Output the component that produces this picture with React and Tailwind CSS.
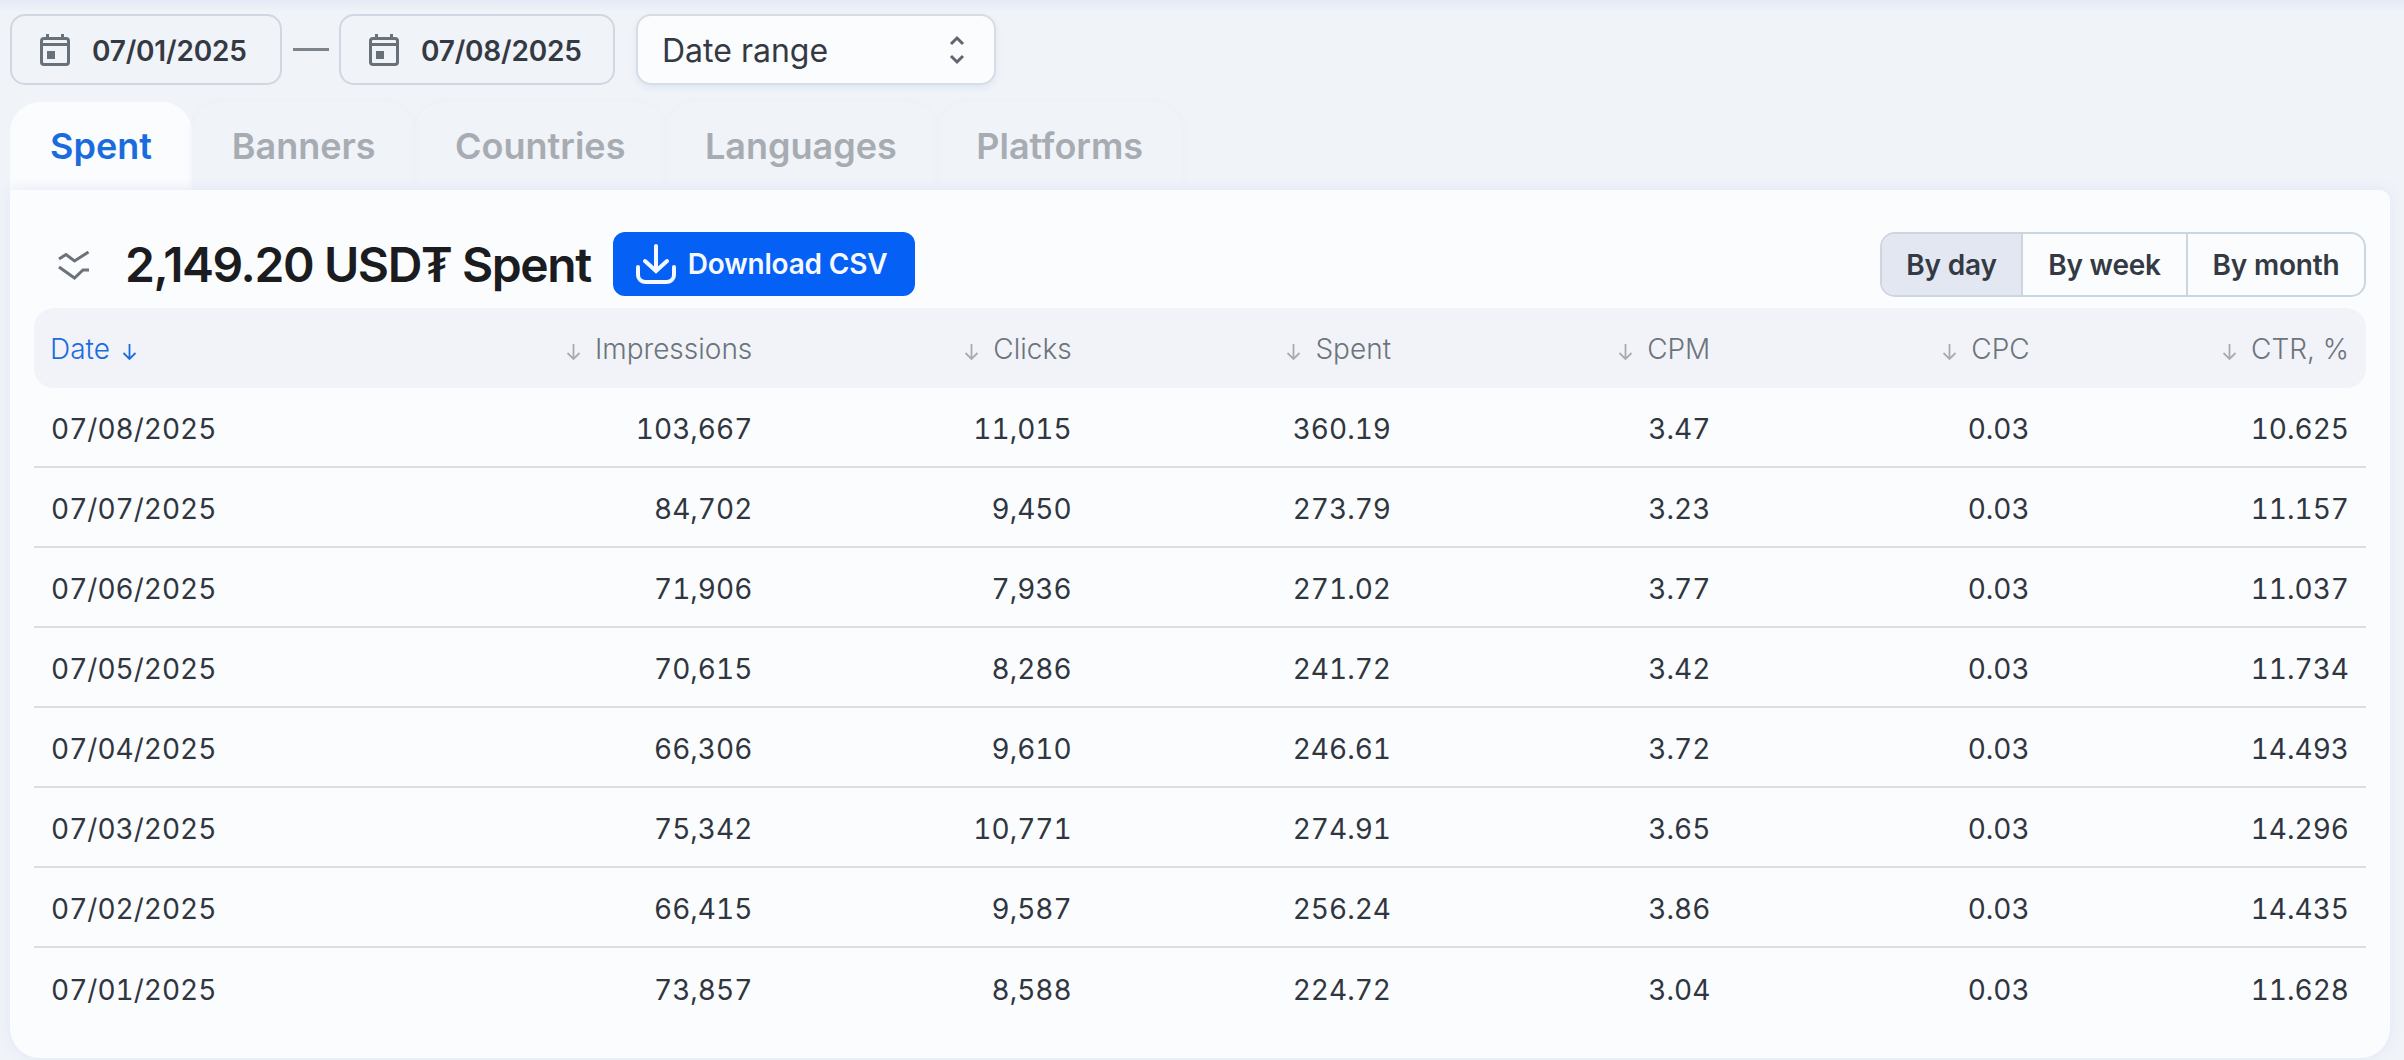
import React from "react";

const rows = [
  ["07/08/2025", "103,667", "11,015", "360.19", "3.47", "0.03", "10.625"],
  ["07/07/2025", "84,702", "9,450", "273.79", "3.23", "0.03", "11.157"],
  ["07/06/2025", "71,906", "7,936", "271.02", "3.77", "0.03", "11.037"],
  ["07/05/2025", "70,615", "8,286", "241.72", "3.42", "0.03", "11.734"],
  ["07/04/2025", "66,306", "9,610", "246.61", "3.72", "0.03", "14.493"],
  ["07/03/2025", "75,342", "10,771", "274.91", "3.65", "0.03", "14.296"],
  ["07/02/2025", "66,415", "9,587", "256.24", "3.86", "0.03", "14.435"],
  ["07/01/2025", "73,857", "8,588", "224.72", "3.04", "0.03", "11.628"],
];

const columns = ["Impressions", "Clicks", "Spent", "CPM", "CPC", "CTR, %"];
const tabs = ["Banners", "Countries", "Languages", "Platforms"];

function CalendarIcon() {
  return (
    <svg width="30" height="32" viewBox="0 0 30 32" fill="none" className="shrink-0">
      <path d="M7.5 0v6M22.5 0v6" stroke="#687079" strokeWidth="3" />
      <rect x="1.5" y="4.500" width="27" height="26" rx="2.500" stroke="#687079" strokeWidth="3" />
      <path d="M2 10.500h26" stroke="#687079" strokeWidth="3" />
      <rect x="7" y="17" width="8" height="8" fill="#687079" />
    </svg>
  );
}

function SortArrow({ color }) {
  return (
    <svg width="15" height="18" viewBox="0 0 15 18" fill="none" className="shrink-0 mt-1.5">
      <path d="M7.500 1v15M1.500 10l6 6 6-6" stroke={color} strokeWidth="1.800" />
    </svg>
  );
}

function DateButton({ value, className }) {
  return (
    <button className={"h-[71px] flex items-center gap-[22px] pl-[28px] rounded-[15px] border-2 border-[#cfd8e2] text-[28px] font-semibold tracking-[-0.2px] text-[#343a43] " + className}>
      <CalendarIcon />
      <span className="pt-[2px]">{value}</span>
    </button>
  );
}

export default function App() {
  return (
    <div className="relative h-[1060px] w-[2404px] overflow-hidden bg-[#f0f3f8] font-['Inter',sans-serif] pt-[14px] px-[10px]">
      <div className="absolute top-0 left-0 right-0 h-[12px] bg-gradient-to-b from-[#e4e9f5] to-[#f0f3f8]" />

      <div className="relative flex items-center">
        <DateButton value="07/01/2025" className="w-[272px]" />
        <div className="w-[36px] h-[3px] bg-[#7d848c] ml-[11px] mr-[10px]" />
        <DateButton value="07/08/2025" className="w-[276px]" />
        <button className="ml-[21px] h-[71px] w-[360px] flex items-center justify-between pl-[24px] pr-[28px] rounded-[15px] border-2 border-[#d5dde7] bg-[#fbfcfe] shadow-[0_3px_6px_#dfe6f2] text-[32px] text-[#343a43]">
          <span className="pt-[2px]">Date range</span>
          <svg width="18" height="30" viewBox="0 0 18 30" fill="none">
            <path d="M3 9l6-6 6 6M3 21l6 6 6-6" stroke="#5f666e" strokeWidth="3" />
          </svg>
        </button>
      </div>

      <div className="flex mt-[17px] h-[88px]">
        <div className="w-[182px] rounded-t-[30px] bg-[#fbfcfe] pt-[17px] pl-[40px] text-[36px] font-semibold text-[#1a6cde]">
          Spent
        </div>
        {tabs.map((tab) => (
          <div key={tab} className="px-[39.75px] pt-[17px] rounded-t-[30px] shadow-[0_0_6px_#ebeff8] text-[36px] font-semibold text-[#a7acb3]">
            {tab}
          </div>
        ))}
      </div>

      <div className="relative w-[2380px] h-[868px] rounded-b-[30px] rounded-tr-[10px] bg-[#fbfcfe] shadow-[0_0_14px_#dfe6f5] pt-[42px] px-[24px]">
        <div className="flex items-center h-[65px]">
          <svg width="32" height="30" viewBox="0 0 32 30" fill="none" className="ml-[24px] mt-[3px]">
            <path d="M1 8l7-4.500 8.500 6.500 14-9M1 16l15.500 11 8.500-8h6" stroke="#6b7279" strokeWidth="3" />
          </svg>
          <h1 className="ml-[35px] text-[48px] font-semibold tracking-[-1.4px] text-[#1a1c1f]">2,149.20 USD₮ Spent</h1>
          <button className="ml-[22px] mb-[1px] w-[302px] h-[64px] flex items-center gap-[12px] pl-[23px] rounded-[12px] bg-[#0560f5] text-[28px] font-semibold tracking-[-0.2px] text-[#f5f8ff]">
            <svg width="40" height="40" viewBox="0 0 40 40" fill="none">
              <path d="M20 2v25M9 17l11 10 11-10M2 23v8a7 7 0 0 0 7 7h22a7 7 0 0 0 7-7v-8" stroke="#f5f8ff" strokeWidth="4" strokeLinecap="round" />
            </svg>
            Download CSV
          </button>
          <div className="ml-auto mr-0 flex h-[65px] rounded-[15px] border-2 border-[#ccd6df] overflow-hidden text-[28px] font-semibold tracking-[-0.2px] text-[#343a43]">
            <div className="w-[141px] flex items-center justify-center bg-[#e2e7f1] border-r-2 border-[#ccd6df]">By day</div>
            <div className="w-[165px] flex items-center justify-center border-r-2 border-[#ccd6df]">By week</div>
            <div className="w-[176px] flex items-center justify-center">By month</div>
          </div>
        </div>

        <div className="grid grid-cols-[399px_repeat(6,1fr)] mt-[11px] h-[80px] rounded-[20px] bg-[#f1f3f8] items-center pr-[17px] pt-[2px] text-[28px] font-light text-[#6d747c]">
          <div className="flex items-center gap-[12px] pl-[16px] text-[#1a6cde]">
            Date <SortArrow color="#1a6cde" />
          </div>
          {columns.map((c) => (
            <div key={c} className="flex justify-end items-center gap-[14px]">
              <SortArrow color="#a7acb3" /> {c}
            </div>
          ))}
        </div>

        {rows.map((row, i) => (
          <div
            key={row[0]}
            className={"grid grid-cols-[399px_repeat(6,1fr)] h-[80px] items-center pr-[17px] pt-[3px] text-[28px] tabular-nums text-[#30363f] " + (i < rows.length - 1 ? "border-b-2 border-[#dcdee3]" : "")}
          >
            <div className="pl-[17px]">{row[0]}</div>
            {row.slice(1).map((v, j) => (
              <div key={j} className="text-right">{v}</div>
            ))}
          </div>
        ))}
      </div>
    </div>
  );
}
